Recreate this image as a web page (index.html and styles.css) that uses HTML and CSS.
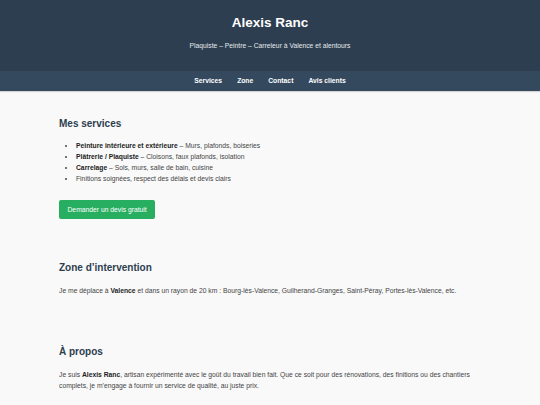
FILE: index.html
```html
<!DOCTYPE html>
<html lang="fr">
<head>
<meta charset="utf-8">
<title>Alexis Ranc</title>
<link rel="stylesheet" href="styles.css">
</head>
<body>
<header class="site-header">
  <h1 class="site-title">Alexis Ranc</h1>
  <p class="site-tagline">Plaquiste – Peintre – Carreleur à Valence et alentours</p>
</header>
<nav class="site-nav">
  <a href="#services">Services</a>
  <a href="#zone">Zone</a>
  <a href="#contact">Contact</a>
  <a href="#avis">Avis clients</a>
</nav>
<main class="content">
  <section class="section section-first" id="services">
    <h2 class="section-title">Mes services</h2>
    <ul class="service-list">
      <li><strong>Peinture intérieure et extérieure</strong> – Murs, plafonds, boiseries</li>
      <li><strong>Plâtrerie / Plaquiste</strong> – Cloisons, faux plafonds, isolation</li>
      <li><strong>Carrelage</strong> – Sols, murs, salle de bain, cuisine</li>
      <li>Finitions soignées, respect des délais et devis clairs</li>
    </ul>
    <a class="btn" href="#contact">Demander un devis gratuit</a>
  </section>
  <section class="section" id="zone">
    <h2 class="section-title">Zone d’intervention</h2>
    <p class="text">Je me déplace à <strong>Valence</strong> et dans un rayon de 20 km : Bourg-lès-Valence, Guilherand-Granges, Saint-Péray, Portes-lès-Valence, etc.</p>
  </section>
  <section class="section" id="apropos">
    <h2 class="section-title">À propos</h2>
    <p class="text">Je suis <strong>Alexis Ranc</strong>, artisan expérimenté avec le goût du travail bien fait. Que ce soit pour des rénovations, des finitions ou des chantiers complets, je m’engage à fournir un service de qualité, au juste prix.</p>
  </section>
</main>
</body>
</html>
```
FILE: styles.css
```css
* { box-sizing: border-box; }
html, body {
  margin: 0;
  padding: 0;
  background: #f9f9f9;
}
body {
  font-family: "Liberation Sans", Arial, sans-serif;
  font-size: 6.75px;
  line-height: 1.6;
  color: #444;
}
.site-header {
  background: #2c3e50;
  color: #fff;
  text-align: center;
  padding: 15px 20px 0;
  height: 71px;
}
.site-title {
  margin: 0;
  font-size: 13.5px;
  line-height: 16px;
  font-weight: bold;
}
.site-tagline {
  margin: 9px 0 0;
  font-size: 6.75px;
  line-height: 11px;
  color: #e6e9ec;
}
.site-nav {
  background: #34495e;
  height: 20px;
  display: flex;
  justify-content: center;
  align-items: center;
  gap: 15px;
  box-shadow: 0 1px 1px rgba(0,0,0,0.15);
}
.site-nav a {
  color: #fff;
  text-decoration: none;
  font-weight: bold;
  font-size: 6.75px;
}
.content {
  padding: 0 59px;
}
.section {
  padding: 25px 0;
}
.section-first {
  padding: 27px 0 18px;
}
.section-title {
  margin: 0;
  font-size: 10px;
  line-height: 12px;
  color: #2c3e50;
  font-weight: bold;
}
.service-list {
  margin: 10px 0 0;
  padding-left: 17px;
}
.service-list li {
  line-height: 11px;
}
.service-list strong,
.text strong {
  color: #222;
}
.btn {
  display: inline-block;
  margin-top: 16px;
  background: #27ae60;
  color: #fff;
  text-decoration: none;
  padding: 0 8.5px;
  height: 19px;
  line-height: 19px;
  border-radius: 2px;
}
.text {
  margin: 11px 0 0;
  line-height: 11px;
}
```
